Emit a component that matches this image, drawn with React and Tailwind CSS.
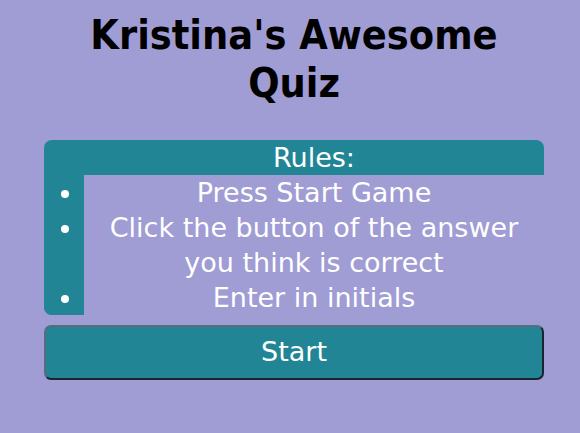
export default function App() {
  const rules = ['Press Start Game', 'Click the button of the answer you think is correct', 'Enter in initials']

  return (
    <div className="min-h-[433px] bg-[#a09cd4] pl-[44px] pr-[36px] pt-[11px] font-['DejaVu_Sans',sans-serif]">
      <h1 className="text-center font-['DejaVu_Sans_Condensed','DejaVu_Sans',sans-serif] text-[41px] font-bold leading-[48px] text-black">
        Kristina's Awesome Quiz
      </h1>

      <div className="mt-[33px] rounded-[8px] bg-[#218596] text-white">
        <h2 className="h-[35px] pl-[40px] text-center text-[27px] leading-[35px]">Rules:</h2>
        <ul className="list-disc pl-[40px] rounded-bl-[8px] bg-[#218596]">
          {rules.map((r) => (
            <li key={r} className="bg-[#a09cd4] px-[20px] text-center text-[27px] leading-[35px]">
              {r}
            </li>
          ))}
        </ul>
      </div>

      <button className="mt-[10px] block h-[55px] w-full rounded-[7px] border-2 border-t-[#5a6a80] border-l-[#5a6a80] border-r-[#1a2330] border-b-[#1a2330] bg-[#218596] text-[27px] text-white">
        Start
      </button>
    </div>
  )
}
